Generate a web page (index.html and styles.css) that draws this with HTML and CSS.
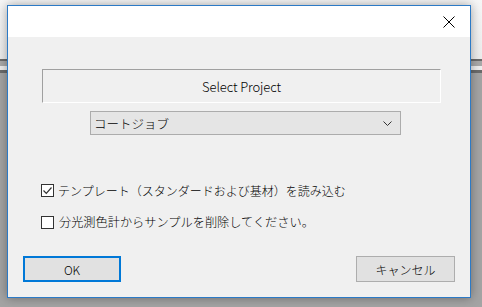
FILE: index.html
```html
<!DOCTYPE html>
<html lang="ja">
<head>
    <meta charset="UTF-8">
    <meta name="viewport" content="width=device-width, initial-scale=1.0">
    <title>Select Project</title>
    <link rel="stylesheet" href="styles.css">
</head>
<body>

<div class="backdrop">
    <div class="bd-top"></div>
    <div class="bd-line"></div>
    <div class="bd-mid"></div>
    <div class="bd-light"></div>
    <div class="bd-line bd-line-thick"></div>
    <div class="bd-bottom"></div>
</div>

<div class="dialog">
    <div class="title-bar">
        <button class="close-btn" title="閉じる">
            <svg width="12" height="12" viewBox="0 0 12 12">
                <path d="M0.5 0.5 L11.5 11.5 M11.5 0.5 L0.5 11.5" stroke="#000" stroke-width="1" fill="none"/>
            </svg>
        </button>
    </div>
    <div class="dialog-body">
        <div class="project-label">Select Project</div>

        <div class="combo">
            <span class="combo-text">コートジョブ</span>
            <svg class="combo-arrow" width="9" height="5" viewBox="0 0 9 5">
                <path d="M0.5 0.5 L4.5 4.5 L8.5 0.5" stroke="#333" stroke-width="1" fill="none"/>
            </svg>
        </div>

        <label class="check-row first">
            <span class="check-box">
                <svg width="11" height="11" viewBox="0 0 11 11">
                    <path d="M1.5 5.5 L4.3 8.3 L9.5 2.5" stroke="#333" stroke-width="1.2" fill="none"/>
                </svg>
            </span>
            <span class="check-text">テンプレート（スタンダードおよび基材）を読み込む</span>
        </label>

        <label class="check-row">
            <span class="check-box"></span>
            <span class="check-text wide">分光測色計からサンプルを削除してください。</span>
        </label>

        <div class="button-row">
            <button class="btn btn-default">OK</button>
            <button class="btn">キャンセル</button>
        </div>
    </div>
</div>

</body>
</html>
```

FILE: styles.css
```css
body {
    margin: 0;
    width: 482px;
    height: 307px;
    overflow: hidden;
    position: relative;
    font-family: "Noto Sans CJK JP", "Noto Sans", sans-serif;
    font-size: 12px;
    font-weight: 300;
    color: #000;
}
.backdrop {
    display: flex;
    flex-direction: column;
    height: 307px;
}
.bd-top {
    height: 59px;
    background: linear-gradient(to bottom, #f7f7f7, #ececec);
}
.bd-line {
    height: 2px;
    background-color: #6b6b6b;
}
.bd-line-thick {
    height: 3px;
}
.bd-mid {
    height: 5px;
    background-color: #a9a9a9;
}
.bd-light {
    height: 4px;
    background-color: #eeeeee;
}
.bd-bottom {
    flex: 1;
    background-color: #a4a4a4;
}

/* the dialog window lies over the backdrop */
.dialog {
    position: absolute;
    left: 7px;
    top: 5px;
    width: 462px;
    height: 291px;
    border: 1px solid #2c7ac6;
    background-color: #f0f0f0;
    box-shadow: 0 0 10px rgba(0, 0, 0, 0.35);
    display: flex;
    flex-direction: column;
}
.title-bar {
    height: 31px;
    background-color: #fff;
    display: flex;
    justify-content: flex-end;
    align-items: center;
}
.close-btn {
    border: none;
    background: none;
    padding: 0;
    margin-right: 15px;
    width: 12px;
    height: 12px;
    display: flex;
}
.dialog-body {
    flex: 1;
    display: flex;
    flex-direction: column;
    padding: 0 15px;
}
.project-label {
    margin: 32px 0 0 19px;
    width: 397px;
    height: 32px;
    border: 1px solid #a0a0a0;
    border-right-color: #fff;
    border-bottom-color: #fff;
    display: flex;
    align-items: center;
    justify-content: center;
    font-family: "Noto Sans CJK JP", "Noto Sans", sans-serif;
    font-weight: 300;
    font-size: 13px;
    letter-spacing: -0.1px;
}
.combo {
    margin: 8px 0 0 67px;
    height: 22px;
    width: 298px;
    border: 1px solid #acacac;
    background-color: #e5e5e5;
    display: flex;
    align-items: center;
    justify-content: space-between;
    padding: 0 8px 0 3px;
}
.combo-text {
    font-size: 12.5px;
}
.combo-arrow {
    display: block;
}
.check-row {
    display: flex;
    align-items: center;
    height: 16px;
    margin-left: 18px;
    margin-top: 16px;
}
.check-row.first {
    margin-top: 47px;
}
.check-box {
    width: 13px;
    height: 13px;
    box-sizing: border-box;
    border: 1px solid #333;
    background-color: #fff;
    display: flex;
    align-items: center;
    justify-content: center;
    margin-right: 4px;
}
.check-box svg {
    display: block;
}
.check-text {
    font-size: 12px;
    white-space: nowrap;
}
.check-text.wide {
    font-size: 12.2px;
    margin-left: 1px;
}
.button-row {
    margin-top: 26px;
    display: flex;
    justify-content: space-between;
}
.btn {
    width: 99px;
    height: 26px;
    border: 1px solid #adadad;
    background-color: #e1e1e1;
    font-family: "Noto Sans CJK JP", "Noto Sans", sans-serif;
    font-weight: 300;
    font-size: 12px;
    padding: 0;
    color: #000;
}
.btn-default {
    width: 98px;
    border: 2px solid #0078d7;
}
```
